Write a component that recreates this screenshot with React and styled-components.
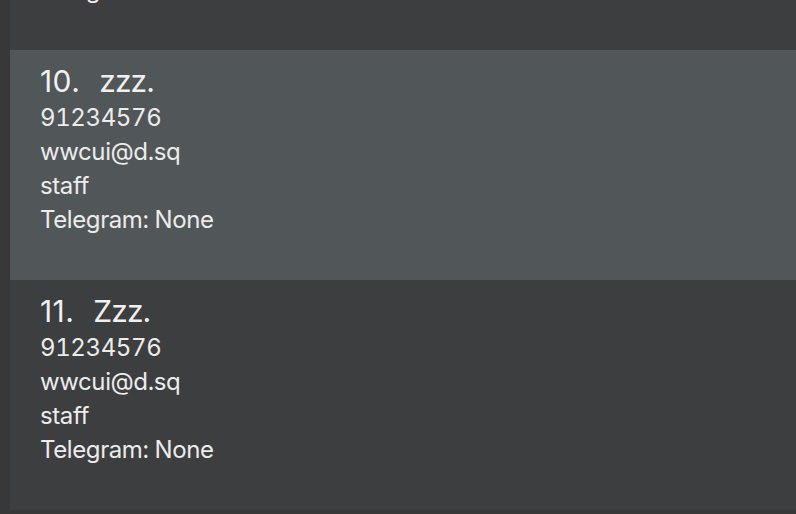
import React, { useLayoutEffect, useRef } from "react";
import styled, { createGlobalStyle } from "styled-components";

const GlobalStyle = createGlobalStyle`
  html, body {
    margin: 0;
    padding: 0;
    background: #383838;
    overflow: hidden;
  }
`;

const persons = [
  { id: 9, name: "zz.", phone: "91234576", email: "wwcui@d.sq", tag: "staff", telegram: "None" },
  { id: 10, name: "zzz.", phone: "91234576", email: "wwcui@d.sq", tag: "staff", telegram: "None" },
  { id: 11, name: "Zzz.", phone: "91234576", email: "wwcui@d.sq", tag: "staff", telegram: "None" },
];

export default function App() {
  const listRef = useRef(null);

  useLayoutEffect(() => {
    // list is scrolled so only the tail of card 9 shows
    if (listRef.current) listRef.current.scrollTop = 180;
  }, []);

  return (
    <>
      <GlobalStyle />
      <Container>
        <ListView ref={listRef}>
          {persons.map((p) => (
            <Cell key={p.id} selected={p.id === 10}>
              <NameRow>
                <Index>{p.id}.</Index>
                <span>{p.name}</span>
              </NameRow>
              <Detail>{p.phone}</Detail>
              <Detail>{p.email}</Detail>
              <Detail>{p.tag}</Detail>
              <Detail>Telegram: {p.telegram}</Detail>
            </Cell>
          ))}
        </ListView>
      </Container>
    </>
  );
}

const Container = styled.div`
  width: 796px;
  height: 514px;
  padding: 0 0 4px 10px;
  box-sizing: border-box;
  background: #383838;
`;

const ListView = styled.div`
  height: 100%;
  overflow: hidden;
  background: #3c3e3f;
`;

const Cell = styled.div`
  height: 230px;
  box-sizing: border-box;
  padding: 12px 0 0 30px;
  background: ${(p) => (p.selected ? "#515658" : "#3c3e3f")};
  color: #ececec;
  font-family: Inter, "Open Sans", sans-serif;
  display: flex;
  flex-direction: column;
`;

const NameRow = styled.div`
  display: flex;
  gap: 19px;
  font-size: 30px;
  line-height: 38px;
  letter-spacing: -0.9px;
  color: #f0f0f0;
`;

const Index = styled.span`
  letter-spacing: 0.4px;
`;

const Detail = styled.div`
  font-size: 24px;
  line-height: 34px;
  letter-spacing: -0.4px;
  font-variant-numeric: tabular-nums;
  padding-top: 1px;
  margin-bottom: -1px;
`;
